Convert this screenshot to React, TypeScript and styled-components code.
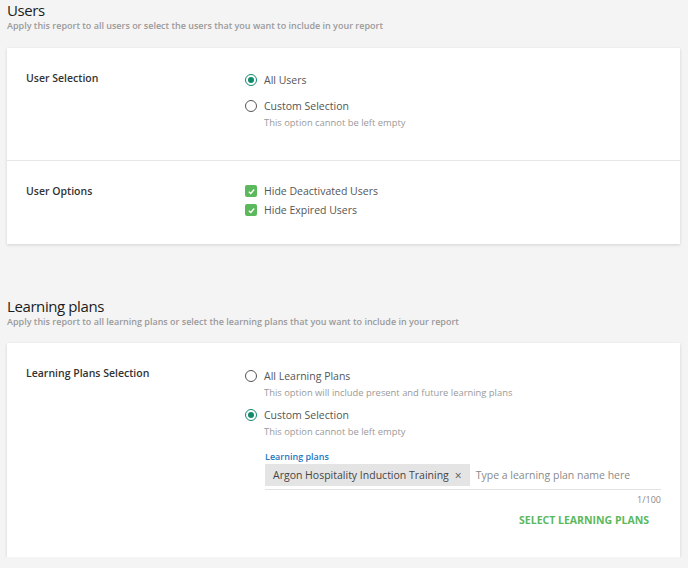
import styled, { createGlobalStyle } from "styled-components";

const GlobalStyle = createGlobalStyle`
    body {
        margin: 0;
        background: #f4f4f4;
        font-family: "Open Sans", "DejaVu Sans", sans-serif;
        font-stretch: 88%;
        color: #333;
    }
`;

const Page = styled.div`
    padding: 0 8px 0 7px;
`;

const Section = styled.section<{ $top: number }>`
    padding-top: ${(p) => p.$top}px;
`;

const Title = styled.h1`
    margin: 0;
    font-size: 15px;
    font-weight: 400;
    letter-spacing: -0.4px;
    line-height: 20px;
    color: #1c1c1c;
`;

const Subtitle = styled.p`
    margin: 0;
    font-size: 9px;
    line-height: 11px;
    color: #9a9a9a;
    font-weight: 600;
`;

const Card = styled.div<{ $top: number }>`
    margin-top: ${(p) => p.$top}px;
    background: #fff;
    box-shadow: 0 1px 3px rgba(0, 0, 0, 0.14);
`;

const Row = styled.div<{ $pad: string }>`
    display: grid;
    grid-template-columns: 238px 1fr;
    padding: ${(p) => p.$pad};

    & + & {
        border-top: 1px solid #e6e6e6;
    }
`;

const Label = styled.div`
    padding-left: 19px;
    font-size: 10.5px;
    font-weight: 600;
    line-height: 14px;
    color: #333;
`;

const Options = styled.div`
    display: flex;
    flex-direction: column;
    padding-right: 19px;
`;

const OptionLine = styled.div<{ $mt?: number }>`
    display: flex;
    align-items: center;
    gap: 7px;
    margin-top: ${(p) => p.$mt ?? 0}px;
    font-size: 10.5px;
    line-height: 14px;
    color: #555;
`;

const RadioCircle = styled.span<{ $on?: boolean }>`
    box-sizing: border-box;
    width: 12px;
    height: 12px;
    border-radius: 50%;
    border: 1.5px solid ${(p) => (p.$on ? "#138a6c" : "#555")};
    display: flex;
    align-items: center;
    justify-content: center;

    &::after {
        content: "";
        width: 6px;
        height: 6px;
        border-radius: 50%;
        background: ${(p) => (p.$on ? "#138a6c" : "transparent")};
    }
`;

const CheckBox = styled.span`
    width: 12px;
    height: 12px;
    border-radius: 2px;
    background: #5cb85c;
    display: flex;
    align-items: center;
    justify-content: center;
`;

const Note = styled.div<{ $mt?: number }>`
    margin-top: ${(p) => p.$mt ?? 0}px;
    padding-left: 19px;
    font-size: 9.4px;
    line-height: 12px;
    color: #9a9a9a;
`;

const Field = styled.div`
    margin-top: 13px;
    padding-left: 20px;
    display: flex;
    flex-direction: column;
`;

const FieldLabel = styled.div`
    font-size: 9px;
    font-weight: 600;
    line-height: 12px;
    color: #1f78c1;
`;

const TagInput = styled.div`
    margin-top: 1px;
    display: flex;
    align-items: center;
    gap: 6px;
    padding-bottom: 3px;
    border-bottom: 1px solid #e2e2e2;
`;

const Chip = styled.span`
    display: inline-flex;
    align-items: center;
    gap: 6px;
    height: 22px;
    padding: 0 8px;
    background: #e4e4e4;
    font-size: 10.5px;
    color: #444;
`;

const ChipClose = styled.span`
    font-size: 12px;
    color: #555;
`;

const Placeholder = styled.span`
    font-size: 10.5px;
    color: #8a8a8a;
`;

const Counter = styled.div`
    margin-top: 4px;
    text-align: right;
    font-size: 9px;
    line-height: 12px;
    color: #888;
`;

const ActionButton = styled.button`
    align-self: flex-end;
    margin: 7px 12px 0 0;
    padding: 0;
    border: none;
    background: none;
    font-family: inherit;
    font-stretch: inherit;
    font-size: 10.5px;
    font-weight: 700;
    line-height: 14px;
    color: #5cb85c;
    cursor: pointer;
`;

function Radio(props: { on?: boolean; text: string; mt?: number }) {
    return (
        <OptionLine $mt={props.mt}>
            <RadioCircle $on={props.on} />
            {props.text}
        </OptionLine>
    );
}

function Check(props: { text: string; mt?: number }) {
    return (
        <OptionLine $mt={props.mt}>
            <CheckBox>
                <svg width="9" height="9" viewBox="0 0 10 10">
                    <path d="M2 5.2 L4.2 7.2 L8 2.8" fill="none" stroke="#fff" strokeWidth="1.5" />
                </svg>
            </CheckBox>
            {props.text}
        </OptionLine>
    );
}

export default function App() {
    return (
        <Page>
            <GlobalStyle />
            <Section $top={0}>
                <Title>Users</Title>
                <Subtitle>Apply this report to all users or select the users that you want to include in your report</Subtitle>
                <Card $top={17}>
                    <Row $pad="23px 0 31px">
                        <Label>User Selection</Label>
                        <Options>
                            <Radio on text="All Users" mt={2} />
                            <Radio text="Custom Selection" mt={12} />
                            <Note $mt={4}>This option cannot be left empty</Note>
                        </Options>
                    </Row>
                    <Row $pad="23px 0 27px">
                        <Label>User Options</Label>
                        <Options>
                            <Check text="Hide Deactivated Users" />
                            <Check text="Hide Expired Users" mt={5} />
                        </Options>
                    </Row>
                </Card>
            </Section>
            <Section $top={52}>
                <Title>Learning plans</Title>
                <Subtitle>Apply this report to all learning plans or select the learning plans that you want to include in your report</Subtitle>
                <Card $top={16}>
                    <Row $pad="23px 0 30px">
                        <Label>Learning Plans Selection</Label>
                        <Options>
                            <Radio text="All Learning Plans" mt={3} />
                            <Note $mt={4}>This option will include present and future learning plans</Note>
                            <Radio on text="Custom Selection" mt={9} />
                            <Note $mt={4}>This option cannot be left empty</Note>
                            <Field>
                                <FieldLabel>Learning plans</FieldLabel>
                                <TagInput>
                                    <Chip>
                                        Argon Hospitality Induction Training
                                        <ChipClose>×</ChipClose>
                                    </Chip>
                                    <Placeholder>Type a learning plan name here</Placeholder>
                                </TagInput>
                                <Counter>1/100</Counter>
                                <ActionButton>SELECT LEARNING PLANS</ActionButton>
                            </Field>
                        </Options>
                    </Row>
                </Card>
            </Section>
        </Page>
    );
}
